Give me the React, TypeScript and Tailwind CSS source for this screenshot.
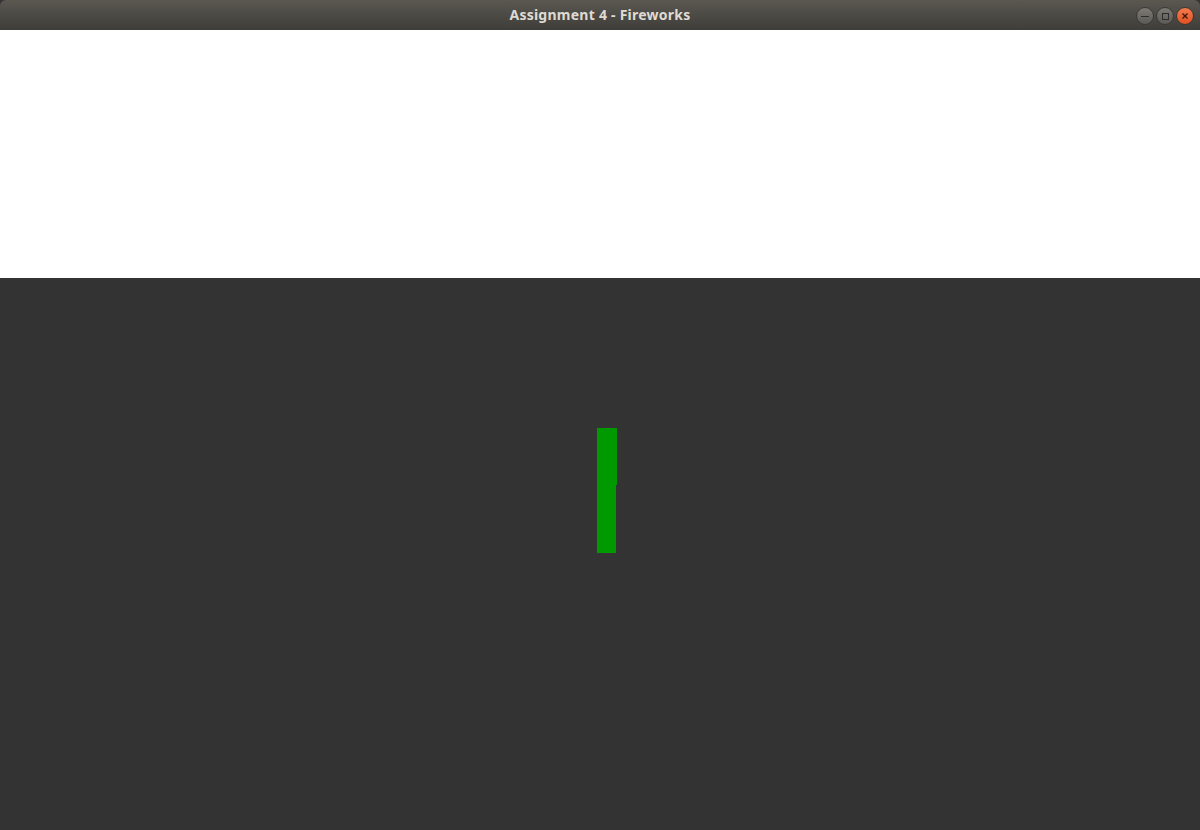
import React from "react";

export default function App() {
  return (
    <div className="w-[1200px] h-[830px] flex flex-col overflow-hidden bg-[#333333]">
      <div className="relative h-[30px] shrink-0 flex items-center justify-center bg-gradient-to-b from-[#5b5852] to-[#3f3d39] rounded-t-[6px]">
        <span
          className="text-[14px] font-bold text-[#dfdbd2] leading-none tracking-[0.25px]"
          style={{ fontFamily: '"Noto Sans", "DejaVu Sans", sans-serif' }}
        >
          Assignment 4 - Fireworks
        </span>
        <div className="absolute right-[6px] top-[7px] flex gap-[2px]">
          <div className="w-[18px] h-[18px] rounded-full bg-gradient-to-b from-[#7d7a74] to-[#5c5a55] border border-[#3a3835] flex items-center justify-center">
            <div className="w-[8px] h-[1px] bg-[#2e2d2a]" />
          </div>
          <div className="w-[18px] h-[18px] rounded-full bg-gradient-to-b from-[#7d7a74] to-[#5c5a55] border border-[#3a3835] flex items-center justify-center">
            <div className="w-[7px] h-[7px] border border-[#2e2d2a]" />
          </div>
          <div className="w-[18px] h-[18px] rounded-full bg-gradient-to-b from-[#f47a4d] to-[#e0501f] border border-[#3a3835] flex items-center justify-center">
            <svg width="8" height="8" viewBox="0 0 8 8">
              <path d="M1.5 1.5 L6.5 6.5 M6.5 1.5 L1.5 6.5" stroke="#3b1a0d" strokeWidth="1.4" />
            </svg>
          </div>
        </div>
      </div>
      <div className="h-[248px] shrink-0 bg-white" />
      <div className="flex-1 bg-[#333333] pt-[150px] pl-[597px]">
        <div className="flex flex-col">
          <div className="w-[20px] h-[57px] bg-[#009900]" />
          <div className="w-[19px] h-[68px] bg-[#009900]" />
        </div>
      </div>
    </div>
  );
}
